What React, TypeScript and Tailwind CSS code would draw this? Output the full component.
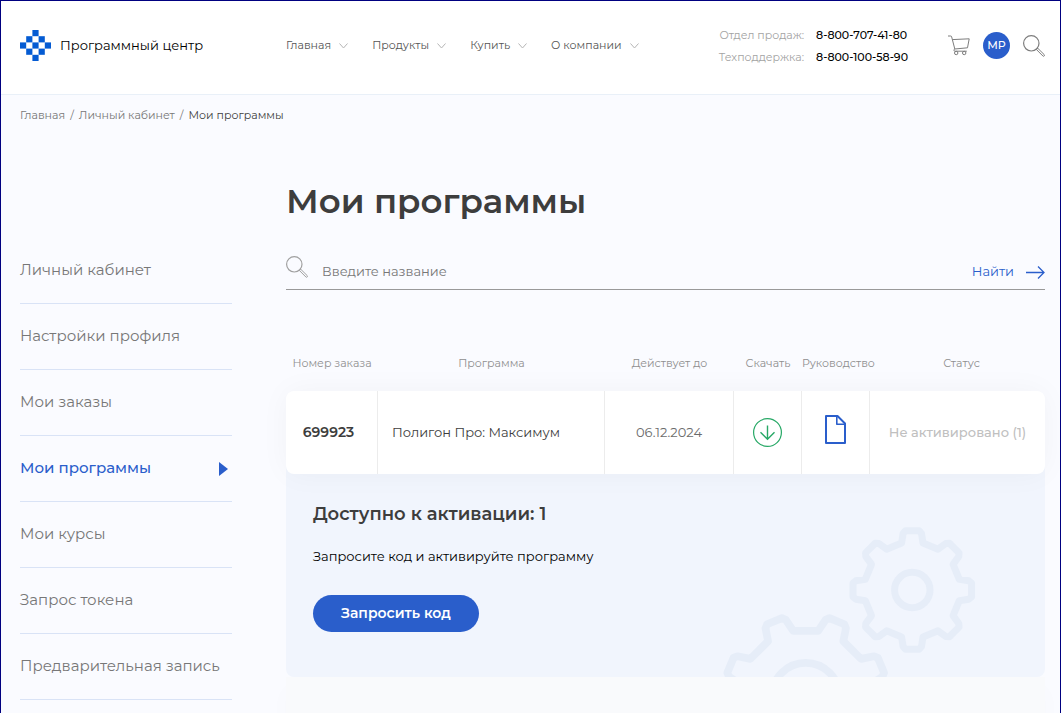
import type React from "react";
import { useState } from "react";

type Point = [number, number];

type Program = {
  order: string;
  name: string;
  validUntil: string;
  status: string;
};

const navItems = ["Главная", "Продукты", "Купить", "О компании"];

const sideItems = [
  "Личный кабинет",
  "Настройки профиля",
  "Мои заказы",
  "Мои программы",
  "Мои курсы",
  "Запрос токена",
  "Предварительная запись",
];

const programs: Program[] = [
  {
    order: "699923",
    name: "Полигон Про: Максимум",
    validUntil: "06.12.2024",
    status: "Не активировано (1)",
  },
];

const logoCells: Point[] = [
  [2, 0],
  [1, 1],
  [3, 1],
  [0, 2],
  [2, 2],
  [4, 2],
  [1, 3],
  [3, 3],
  [2, 4],
];

// Repeats one tooth eight times around the centre
const gearPath = (tooth: Point[], startAngle: number) => {
  const points: string[] = [];
  for (let i = 0; i < 8; i++) {
    const a = ((startAngle + i * 45) * Math.PI) / 180;
    tooth.forEach(([x, y]) => {
      const px = x * Math.cos(a) - y * Math.sin(a);
      const py = x * Math.sin(a) + y * Math.cos(a);
      points.push(`${px.toFixed(2)} ${py.toFixed(2)}`);
    });
  }
  return `M${points.join("L")}Z`;
};

const smallTooth: Point[] = [
  [-10.7, -47],
  [-9.2, -56.5],
  [-6.8, -59.3],
  [6.8, -59.3],
  [9.2, -56.5],
  [10.7, -47],
];

const bigTooth: Point[] = [
  [-13.6, -65.5],
  [-11, -78.5],
  [-8, -81.5],
  [8, -81.5],
  [11, -78.5],
  [13.6, -65.5],
];

const Logo = () => (
  <svg width="31" height="31" viewBox="0 0 31 31" className="shrink-0">
    {logoCells.map(([x, y]) => (
      <rect
        key={`${x}-${y}`}
        x={x * 6.2}
        y={y * 6.2}
        width="6.2"
        height="6.2"
        fill="#045bd3"
      />
    ))}
  </svg>
);

const Chevron = () => (
  <svg width="9" height="6" viewBox="0 0 9 6" fill="none" stroke="#b5b5b5">
    <path d="M.5.5l4 4.5 4-4.5" />
  </svg>
);

const SearchIcon = ({ color }: { color: string }) => (
  <svg width="22" height="22" viewBox="0 0 22 22" fill="none" stroke={color}>
    <circle cx="8.3" cy="8.3" r="7.7" strokeWidth="1.2" />
    <path d="m13.3 14.4 1.3-1.3 6.6 6.5a.9.9 0 0 1-1.3 1.4z" />
  </svg>
);

const CartIcon = () => (
  <svg width="22" height="21" viewBox="0 0 22 21" fill="none" stroke="#7d7d7d">
    <path d="M0 1h2.6c.7 0 .9.3 1.1 1l3.1 12" />
    <path d="M4.4 4.6l16.8-.8-1.7 9-12.7 1.2" />
    <path d="M18.8 16.2H6.8c-1.2 0-1.2-2 0-2.2" />
    <circle cx="8.2" cy="18" r="1.7" />
    <circle cx="16.2" cy="18" r="1.7" />
  </svg>
);

const DownloadIcon = () => (
  <svg width="29" height="29" viewBox="0 0 29 29" fill="none" stroke="#27a866">
    <circle cx="14.5" cy="14.5" r="13.9" strokeWidth="1.2" />
    <path d="M14.5 7.5v13.5M7.5 14.2l7 7 7-7" strokeWidth="1.4" />
  </svg>
);

const FileIcon = () => (
  <svg
    width="22"
    height="30"
    viewBox="0 0 22 30"
    fill="none"
    stroke="#2a5ecb"
    strokeWidth="2"
    strokeLinejoin="round"
  >
    <path d="M1 1h11.5l7.5 7.5V28H1z" />
    <path d="M11.8 1.5v7.8h8" strokeWidth="1.6" />
  </svg>
);

const Gears = () => (
  <svg
    width="254"
    height="150"
    viewBox="0 0 254 150"
    fill="none"
    stroke="#e6edf8"
    strokeLinejoin="round"
    className="absolute right-[69px] bottom-0"
  >
    <g transform="translate(190.3 63)" strokeWidth="7">
      <path d={gearPath(smallTooth, 0)} />
      <circle r="17.7" />
    </g>
    <g transform="translate(83.7 169.5)" strokeWidth="7.7">
      <path d={gearPath(bigTooth, 22.5)} />
      <circle r="33.7" />
    </g>
  </svg>
);

const Header = () => (
  <header className="flex h-[94px] items-center border-b border-[#e9f0f8] bg-white pr-[15px] pb-1 pl-[19px]">
    <a href="#" className="mr-[54px] flex w-[212px] shrink-0 items-center gap-[9px] text-[13px] text-black">
      <Logo />
      Программный центр
    </a>
    <nav className="flex items-center gap-6 text-[11px] text-[#555]">
      {navItems.map((item) => (
        <a key={item} href="#" className="flex items-center gap-2 whitespace-nowrap">
          {item}
          <Chevron />
        </a>
      ))}
    </nav>
    <dl className="ml-auto grid grid-cols-[auto_auto] gap-x-3 text-[11px] leading-[22px] whitespace-nowrap">
      <dt className="text-right text-[#a3a3a3]">Отдел продаж:</dt>
      <dd className="font-medium text-black">8-800-707-41-80</dd>
      <dt className="text-right text-[#a3a3a3]">Техподдержка:</dt>
      <dd className="font-medium text-black">8-800-100-58-90</dd>
    </dl>
    <div className="ml-10 flex items-center gap-[13px]">
      <button aria-label="Корзина">
        <CartIcon />
      </button>
      <button className="h-[27px] w-[27px] rounded-full bg-[#2a5ecb] text-[11px] font-medium text-white">
        МР
      </button>
      <button aria-label="Поиск">
        <SearchIcon color="#7d7d7d" />
      </button>
    </div>
  </header>
);

const ProgramTable = () => (
  <table className="relative z-10 w-full table-fixed border-separate border-spacing-0">
    <colgroup>
      <col className="w-[92px]" />
      <col />
      <col className="w-[129px]" />
      <col className="w-[68px]" />
      <col className="w-[68px]" />
      <col className="w-[175px]" />
    </colgroup>
    <thead>
      <tr className="h-14 text-[11px] whitespace-nowrap text-[#8f8f8f] *:font-normal">
        <th className="p-0">Номер заказа</th>
        <th className="p-0">Программа</th>
        <th className="p-0">Действует до</th>
        <th className="p-0">Скачать</th>
        <th className="p-0">Руководство</th>
        <th className="p-0 pl-2">Статус</th>
      </tr>
    </thead>
    <tbody>
      {programs.map((program) => (
        <tr
          key={program.order}
          className="h-[83px] rounded-lg bg-white text-center text-[13px] shadow-[0_0_30px_rgba(0,0,0,0.04)] *:border-[#ececec]"
        >
          <td className="rounded-l-lg border-r p-0 pr-1.5 text-[14px] font-semibold text-[#3d3d3d]">
            {program.order}
          </td>
          <td className="border-r p-0 pl-3.5 text-left text-[#3d3d3d]">{program.name}</td>
          <td className="border-r p-0 text-[#6b6b6b]">{program.validUntil}</td>
          <td className="border-r p-0">
            <button aria-label="Скачать" className="mx-auto block">
              <DownloadIcon />
            </button>
          </td>
          <td className="border-r p-0">
            <button aria-label="Руководство" className="mx-auto block pb-1.5">
              <FileIcon />
            </button>
          </td>
          <td className="rounded-r-lg p-0 font-medium text-[#c0c0c0]">{program.status}</td>
        </tr>
      ))}
    </tbody>
  </table>
);

const App = () => {
  const [query, setQuery] = useState("");

  const handleSearch = (e: React.FormEvent) => {
    e.preventDefault();
  };

  return (
    <div className="min-h-screen overflow-hidden border-x border-t border-[#000080] bg-[#fafbff] font-[Montserrat,Inter,sans-serif]">
      <Header />
      <div className="pr-[15px] pl-[19px]">
        <div className="flex gap-[5px] pt-3 text-[11px] leading-4 text-[#777]">
          <a href="#">Главная</a>
          <span>/</span>
          <a href="#">Личный кабинет</a>
          <span>/</span>
          <span className="text-[#3d3d3d]">Мои программы</span>
        </div>

        <div className="flex gap-[54px]">
          <aside className="w-[212px] shrink-0 pt-[115px]">
            {sideItems.map((item) => (
              <a
                key={item}
                href="#"
                className={
                  item === "Мои программы"
                    ? "flex h-[66px] items-center justify-between border-b border-[#d9e3f6] pr-1 text-[15px] font-medium text-[#2a5ecb]"
                    : "flex h-[66px] items-center border-b border-[#d9e3f6] text-[15px] whitespace-nowrap text-[#777]"
                }
              >
                {item}
                {item === "Мои программы" && (
                  <svg width="9" height="14" viewBox="0 0 9 14" fill="#2a5ecb">
                    <path d="M0 0 9 7 0 14z" />
                  </svg>
                )}
              </a>
            ))}
          </aside>

          <main className="min-w-0 flex-1 pt-[53px]">
            <h1 className="text-[34px] leading-[50px] font-semibold text-[#3d3d3d]">
              Мои программы
            </h1>

            <form
              onSubmit={handleSearch}
              className="mt-[27px] flex h-[37px] items-start border-b border-[#999]"
            >
              <label htmlFor="search" aria-label="Введите название" className="mr-[14px] pt-[3px]">
                <SearchIcon color="#a0a0a0" />
              </label>
              <input
                id="search"
                value={query}
                onChange={(e) => setQuery(e.target.value)}
                placeholder="Введите название"
                className="h-9 min-w-0 flex-1 text-[13px] outline-none placeholder:text-[#777]"
              />
              <button className="flex h-9 items-center gap-3 pt-0.5 text-[13px] text-[#2a5ecb]">
                Найти
                <svg width="19" height="13" viewBox="0 0 19 13" fill="none" stroke="#2a5ecb" strokeWidth="1.3">
                  <path d="M0 6.5h18M12 .5l6 6-6 6" />
                </svg>
              </button>
            </form>

            <div className="mt-[45px]">
              <ProgramTable />
              <section className="relative -mt-2 h-[211px] overflow-hidden rounded-b-lg bg-[#f1f5fd] px-[27px] pt-9">
                <Gears />
                <h2 className="text-[18px] leading-6 font-semibold text-[#3d3d3d]">
                  Доступно к активации: 1
                </h2>
                <p className="mt-5 text-[13px] leading-5 text-black">
                  Запросите код и активируйте программу
                </p>
                <button className="mt-[29px] h-[37px] rounded-full bg-[#2a5ecb] px-7 text-[14px] font-semibold text-white">
                  Запросить код
                </button>
              </section>
              <div className="h-9 bg-[#f9fafc] shadow-[0_12px_24px_rgba(0,0,0,0.02)]" />
            </div>
          </main>
        </div>
      </div>
    </div>
  );
};

export default App;
